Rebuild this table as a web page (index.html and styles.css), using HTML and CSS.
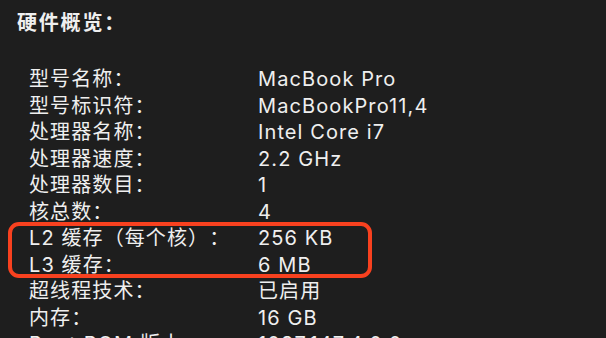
FILE: index.html
```html
<!DOCTYPE html>
<html lang="zh-CN">
<head>
<meta charset="utf-8">
<link rel="stylesheet" href="styles.css">
</head>
<body>
<div class="panel">
  <h1 class="title">硬件概览：</h1>
  <div class="list">
    <div class="row"><span class="label">型号名称：</span><span class="value">MacBook Pro</span></div>
    <div class="row"><span class="label">型号标识符：</span><span class="value">MacBookPro11,4</span></div>
    <div class="row"><span class="label">处理器名称：</span><span class="value">Intel Core i7</span></div>
    <div class="row"><span class="label">处理器速度：</span><span class="value">2.2 GHz</span></div>
    <div class="row"><span class="label">处理器数目：</span><span class="value">1</span></div>
    <div class="row"><span class="label">核总数：</span><span class="value">4</span></div>
    <div class="row"><span class="label">L2 缓存（每个核）：</span><span class="value">256 KB</span></div>
    <div class="row"><span class="label">L3 缓存：</span><span class="value">6 MB</span></div>
    <div class="row"><span class="label">超线程技术：</span><span class="value">已启用</span></div>
    <div class="row"><span class="label">内存：</span><span class="value">16 GB</span></div>
    <div class="row"><span class="label">Boot ROM 版本：</span><span class="value">1037.147.4.0.0</span></div>
    <div class="highlight"></div>
  </div>
</div>
</body>
</html>
```
FILE: styles.css
```css
html, body {
  margin: 0;
  padding: 0;
  background: #1e1e1e;
  height: 100%;
  overflow: hidden;
}
.panel {
  font-family: "Inter", "Noto Sans CJK SC", sans-serif;
  color: #efefef;
  font-size: 20px;
  line-height: 26.5px;
  letter-spacing: 1.1px;
  text-spacing-trim: space-all;
  padding: 10px 0 0 17px;
}
.title {
  margin: 0;
  font-size: 20px;
  font-weight: 700;
  line-height: 26.5px;
  letter-spacing: 1.8px;
}
.list {
  position: relative;
  margin-top: 29.5px;
  padding-left: 12px;
}
.row {
  display: grid;
  grid-template-columns: 229px auto;
}
.label, .value {
  white-space: nowrap;
}
.highlight {
  position: absolute;
  left: -9px;
  top: 156px;
  width: 356px;
  height: 48px;
  border: 4px solid #f8411f;
  border-radius: 11px;
  pointer-events: none;
}
```
